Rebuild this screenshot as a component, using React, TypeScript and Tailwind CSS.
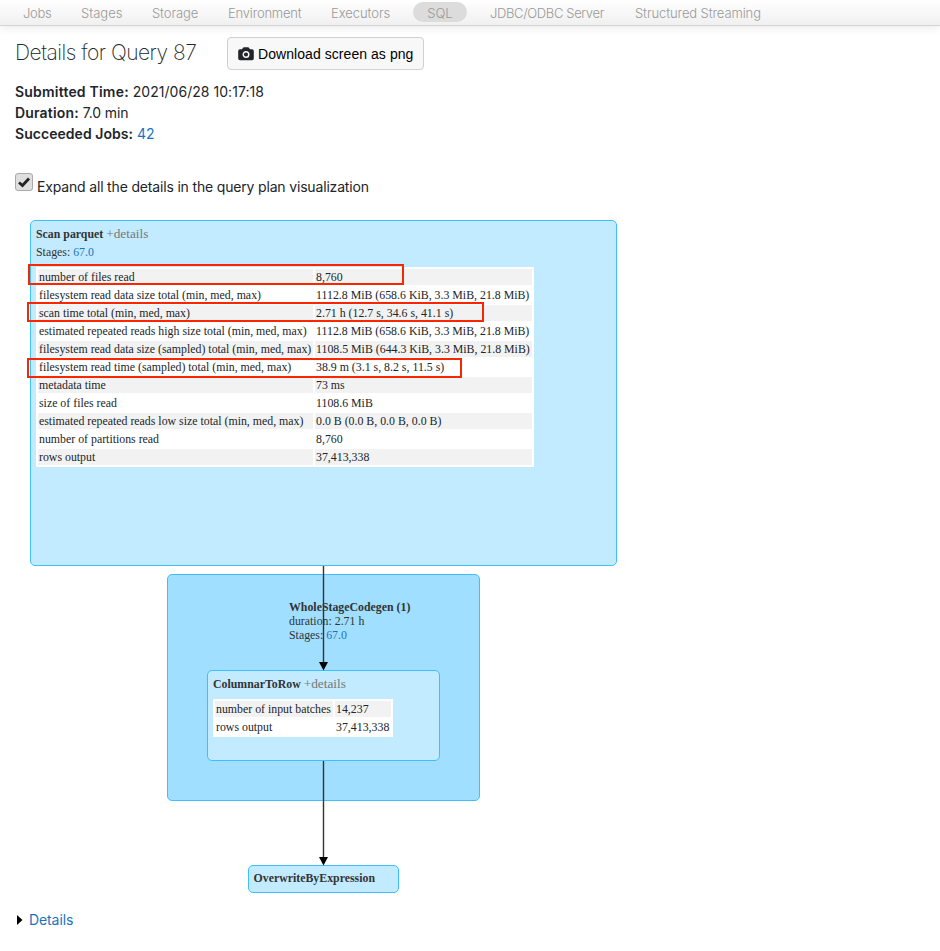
const scanMetrics: [string, string][] = [
  ["number of files read", "8,760"],
  ["filesystem read data size total (min, med, max)", "1112.8 MiB (658.6 KiB, 3.3 MiB, 21.8 MiB)"],
  ["scan time total (min, med, max)", "2.71 h (12.7 s, 34.6 s, 41.1 s)"],
  ["estimated repeated reads high size total (min, med, max)", "1112.8 MiB (658.6 KiB, 3.3 MiB, 21.8 MiB)"],
  ["filesystem read data size (sampled) total (min, med, max)", "1108.5 MiB (644.3 KiB, 3.3 MiB, 21.8 MiB)"],
  ["filesystem read time (sampled) total (min, med, max)", "38.9 m (3.1 s, 8.2 s, 11.5 s)"],
  ["metadata time", "73 ms"],
  ["size of files read", "1108.6 MiB"],
  ["estimated repeated reads low size total (min, med, max)", "0.0 B (0.0 B, 0.0 B, 0.0 B)"],
  ["number of partitions read", "8,760"],
  ["rows output", "37,413,338"],
];

const rowMetrics: [string, string][] = [
  ["number of input batches", "14,237"],
  ["rows output", "37,413,338"],
];

function Metrics({ rows, columns }: { rows: [string, string][]; columns: string }) {
  return (
    <div className={`grid w-max gap-[2px] bg-white p-[2px] leading-[17px] text-[#212529] ${columns}`}>
      {rows.flatMap(([name, value], i) => {
        const fill = i % 2 === 0 ? "bg-[#f2f2f2]" : "bg-white";
        return [
          <div key={`${i}n`} className={`h-4 whitespace-nowrap pl-px ${fill}`}>{name}</div>,
          <div key={`${i}v`} className={`h-4 whitespace-nowrap pl-px ${fill}`}>{value}</div>,
        ];
      })}
    </div>
  );
}

function NavItem({ label, size }: { label: string; size: string }) {
  return <a className={`block whitespace-nowrap ${size}`}>{label}</a>;
}

function CameraIcon() {
  return (
    <svg viewBox="0 0 16 14" className="mr-[4px] h-[14px] w-[16px] shrink-0">
      <path d="M2 2.2H4L5 0.8Q5.3 0.3 6 0.3H10Q10.7 0.3 11 0.8L12 2.2H14Q15.8 2.2 15.8 4V11.5Q15.8 13.3 14 13.3H2Q0.2 13.3 0.2 11.5V4Q0.2 2.2 2 2.2Z" fill="#212529" />
      <circle cx="8" cy="7.5" r="2.8" fill="none" stroke="#f8f8f8" strokeWidth="1.4" />
    </svg>
  );
}

export default function App() {
  return (
    <div className="h-[951px] w-[940px] overflow-hidden bg-white font-['Inter',sans-serif] text-sm text-[#212529]">
      <nav className="flex h-[26px] border-b border-[#d4d4d4] bg-linear-to-b from-white to-[#f0f0f0] pl-[23px] text-[13px] leading-[27px] font-light text-[#999] shadow-[0_1px_10px_rgba(0,0,0,0.1)]">
        <NavItem label="Jobs" size="w-[58px] tracking-[-0.3px]" />
        <NavItem label="Stages" size="w-[71px]" />
        <NavItem label="Storage" size="w-[76px] tracking-[-0.1px]" />
        <NavItem label="Environment" size="w-[103px] tracking-[-0.2px]" />
        <NavItem label="Executors" size="w-[82px] tracking-[-0.05px]" />
        <a className="mt-[2px] mr-[23px] block h-5 w-[54px] rounded-full bg-[#dcdcdc] text-center leading-[23px]">SQL</a>
        <NavItem label="JDBC/ODBC Server" size="w-[145px] tracking-[-0.36px]" />
        <NavItem label="Structured Streaming" size="w-[140px] tracking-[-0.1px]" />
      </nav>

      <header className="flex pt-[11px] pl-[15px]">
        <h1 className="w-[212px] text-[21px] leading-[32px] font-extralight tracking-[-0.5px] whitespace-nowrap">Details for Query 87</h1>
        <button className="flex h-[33px] w-[197px] items-center rounded-[4px] border border-[#d0d0d0] bg-[#f8f8f8] pl-[10px] font-['Liberation_Sans',sans-serif] text-[14px] tracking-[0.06px] whitespace-nowrap text-black">
          <CameraIcon />
          Download screen as png
        </button>
      </header>

      <section className="pt-[11px] pl-[15px] leading-[21px]">
        <p><b className="font-semibold tracking-[0.2px]">Submitted Time:</b> <span className="tracking-[0.04px]">2021/06/28 10:17:18</span></p>
        <p><b className="font-semibold tracking-[0.17px]">Duration:</b> <span className="tracking-[-0.15px]">7.0 min</span></p>
        <p><b className="font-semibold tracking-[0.04px]">Succeeded Jobs:</b> <a className="text-[#1a73c0]">42</a></p>
      </section>

      <label className="mt-[29px] flex h-[24px] pl-[15px]">
        <span className="mr-[4px] flex size-[18px] items-center justify-center rounded-[3px] border border-[#aaa] bg-[#dedede]">
          <svg viewBox="0 0 14 14" className="size-[14px]">
            <path d="M2 7.5 L5.5 10.5 L12 3.5" fill="none" stroke="#222" strokeWidth="2.8" />
          </svg>
        </span>
        <span className="pt-[4px] leading-[20px] tracking-[-0.17px]">Expand all the details in the query plan visualization</span>
      </label>

      <main className="relative mt-px h-[711px] font-['Liberation_Serif',serif] text-[11.85px] text-[#333]">
        <div className="absolute top-[22px] left-[30px] h-[346px] w-[587px] rounded-[5px] border border-[#3ec0ff] bg-[#c3ebff] pl-[5px]">
          <p className="h-[22px] pt-[4px] leading-[18px]"><b>Scan parquet</b> <span className="text-[13.3px] text-[#777]">+details</span></p>
          <p className="h-[18px] leading-[18px]">Stages: <a className="text-[#1a73c0]">67.0</a></p>
          <div className="mt-[6px]">
            <Metrics rows={scanMetrics} columns="grid-cols-[275px_217px]" />
          </div>
        </div>

        <div className="absolute top-[376px] left-[167px] h-[227px] w-[313px] rounded-[5px] border border-[#3ec0ff] bg-[#a0dfff]">
          <div className="pt-[25px] pl-[121px] leading-[14px]">
            <p><b>WholeStageCodegen (1)</b></p>
            <p>duration: 2.71 h</p>
            <p>Stages: <a className="text-[#1a73c0]">67.0</a></p>
          </div>
        </div>

        <div className="absolute top-[472px] left-[207px] h-[91px] w-[233px] rounded-[5px] border border-[#3ec0ff] bg-[#c3ebff] pl-[5px]">
          <p className="h-[22px] pt-[4px] leading-[18px]"><b>ColumnarToRow</b> <span className="text-[13.3px] text-[#777]">+details</span></p>
          <div className="mt-[6px]">
            <Metrics rows={rowMetrics} columns="grid-cols-[118px_56px]" />
          </div>
        </div>

        <div className="absolute top-[667px] left-[248px] h-[28px] w-[151px] rounded-[5px] border border-[#3ec0ff] bg-[#c3ebff] pt-[3px] pl-[4.5px] leading-[18px]">
          <b>OverwriteByExpression</b>
        </div>

        <svg className="absolute top-[368px] left-[313px] h-[300px] w-[20px]" viewBox="0 0 20 300">
          <path d="M10.5 0V97M10.5 195V292" stroke="#333" strokeWidth="1.4" />
          <path d="M6 96H15L10.5 104.5ZM6 291H15L10.5 299.5Z" fill="#000" />
        </svg>

        <div className="absolute top-[66px] left-[28px] h-[21px] w-[376px] border-2 border-[#fa2600]" />
        <div className="absolute top-[104px] left-[27px] h-[20px] w-[457px] border-2 border-[#fa2600]" />
        <div className="absolute top-[160px] left-[27px] h-[20px] w-[435px] border-2 border-[#fa2600]" />
      </main>

      <footer className="flex items-center pl-[17px] leading-[21px]">
        <svg viewBox="0 0 6 10" className="mr-[6px] h-[10px] w-[6px]"><path d="M0 0L5.5 5L0 10Z" fill="#000" /></svg>
        <a className="tracking-[-0.1px] text-[#1a73c0]">Details</a>
      </footer>
    </div>
  );
}
